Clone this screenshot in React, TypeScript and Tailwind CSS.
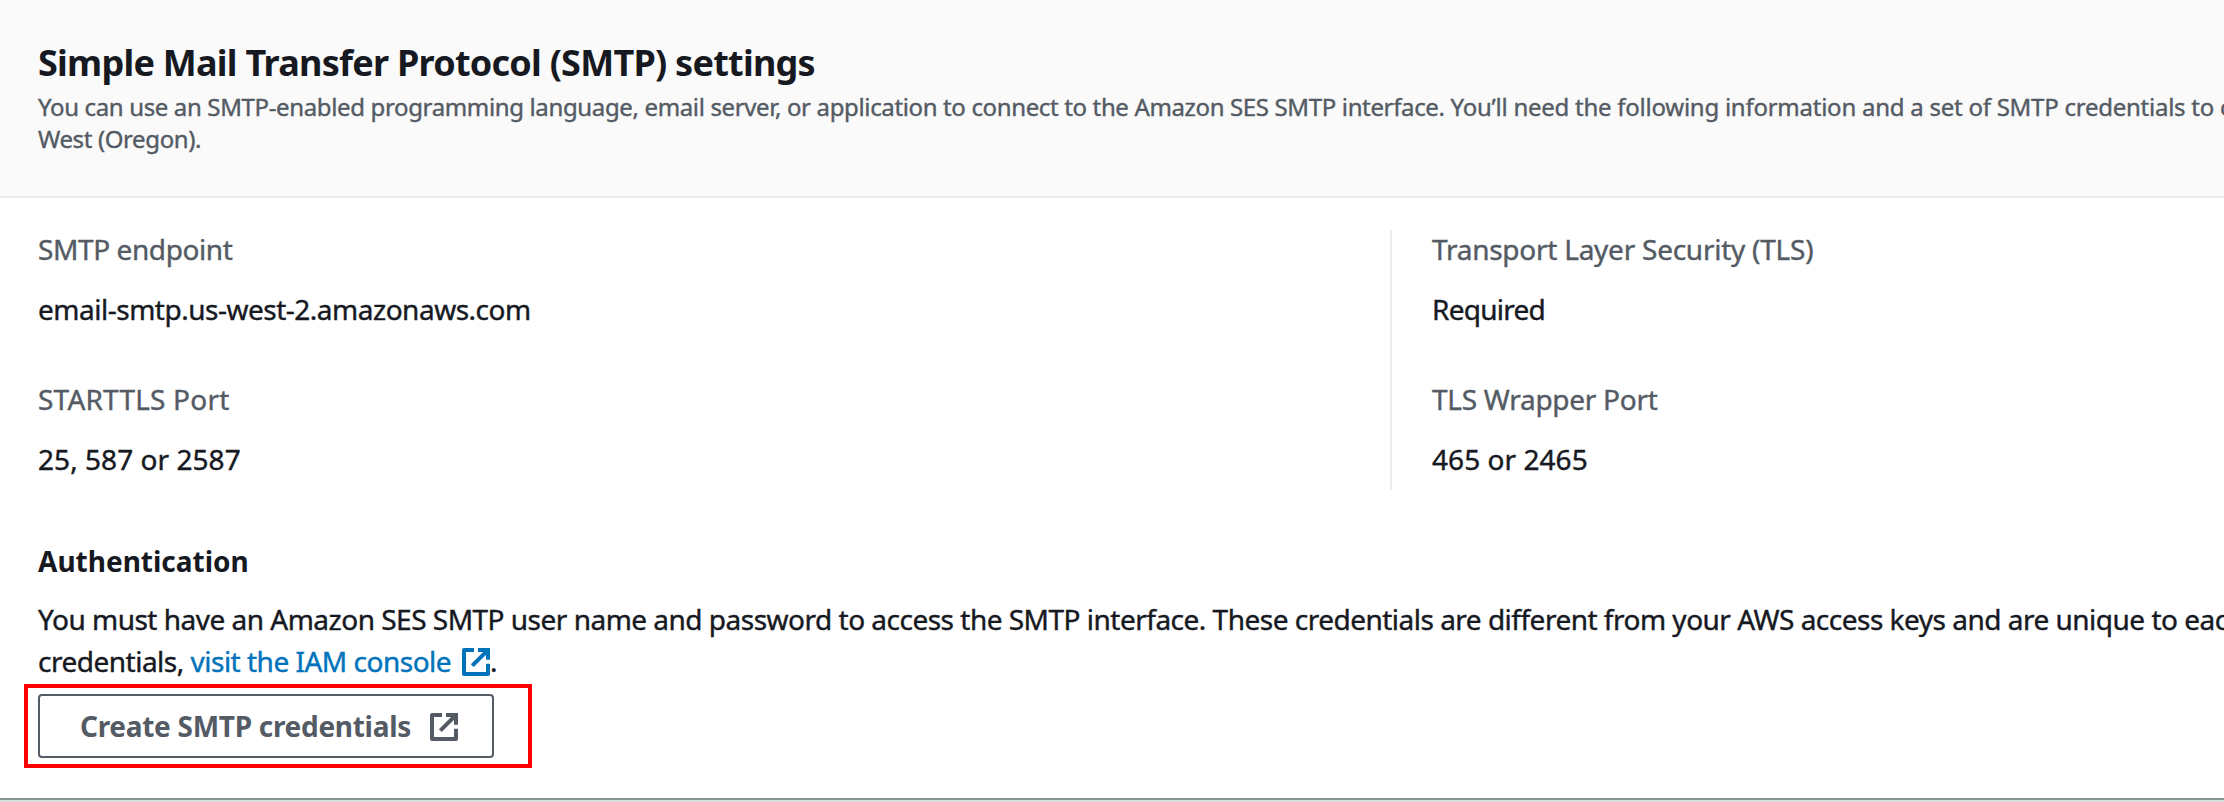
import React from "react";

function ExternalIcon({ className = "" }: { className?: string }) {
  return (
    <svg viewBox="0 0 28 28" className={`h-7 w-7 shrink-0 ${className}`} fill="none" stroke="currentColor" strokeWidth="4" aria-hidden="true">
      <path d="M12 2H2V26H26V15.7" strokeLinejoin="round" />
      <path d="M16 2H26V11.7" />
      <path d="M10.3 17.7L25 3" />
    </svg>
  );
}

type FieldProps = { label: string; value: string; labelClass: string; valueClass: string };

function Field({ label, value, labelClass, valueClass }: FieldProps) {
  return (
    <div className="flex flex-col gap-5 [-webkit-text-stroke:0.4px_currentColor]">
      <dt className={`leading-10 text-[#545b64] ${labelClass}`}>{label}</dt>
      <dd className={`leading-10 text-[#16191f] ${valueClass}`}>{value}</dd>
    </div>
  );
}

export default function App() {
  return (
    <div className="flex h-[802px] w-[2224px] flex-col overflow-hidden bg-[#d9dede] font-['Noto_Sans',sans-serif] text-[28px] text-[#16191f]">
      <section className="flex h-[800px] flex-col border-b-2 border-[#879596] bg-white">
        <header className="h-[198px] border-b-2 border-[#eaeded] bg-[#fafafa] pt-[41px] pl-[38px] whitespace-nowrap">
          <h1 className="text-4xl leading-[44px] font-bold tracking-[-0.75px]">Simple Mail Transfer Protocol (SMTP) settings</h1>
          <p className="mt-1.5 text-2xl leading-8 text-[#545b64] [-webkit-text-stroke:0.4px_currentColor]">
            <span className="block tracking-[-0.25px]">
              <span className="tracking-[-0.357px]">
                You can use an SMTP-enabled programming language, email server, or application to connect to the Amazon SES SMTP interface.
              </span>{" "}
              You’ll need the following information and a set of SMTP credentials to c
            </span>
            <span className="block tracking-[-0.38px]">West (Oregon).</span>
          </p>
        </header>

        <div className="pt-8 pl-[38px] whitespace-nowrap">
          <div className="grid h-[260px] grid-cols-[1352px_1fr]">
            <dl className="-mt-px flex flex-col gap-[50px]">
              <Field label="SMTP endpoint" value="email-smtp.us-west-2.amazonaws.com" labelClass="tracking-[-0.4px]" valueClass="tracking-[-0.49px]" />
              <Field label="STARTTLS Port" value="25, 587 or 2587" labelClass="tracking-[0.2px]" valueClass="tracking-[0.05px]" />
            </dl>
            <div className="border-l-2 border-[#eaeded] pl-10">
              <dl className="-mt-px flex flex-col gap-[50px]">
                <Field label="Transport Layer Security (TLS)" value="Required" labelClass="tracking-[-0.25px]" valueClass="tracking-[-0.75px]" />
                <Field label="TLS Wrapper Port" value="465 or 2465" labelClass="tracking-[-0.28px]" valueClass="tracking-[0.05px]" />
              </dl>
            </div>
          </div>

          <h2 className="mt-[51px] leading-10 font-bold tracking-[0px]">Authentication</h2>
          <p className="mt-[17px] leading-[42px] [-webkit-text-stroke:0.4px_currentColor]">
            <span className="block tracking-[-0.505px]">
              You must have an Amazon SES SMTP user name and password to access the SMTP interface. These credentials are different from your AWS access keys and are unique to eac
            </span>
            <span className="flex items-center">
              <span className="tracking-[-0.5px]">credentials,&nbsp;</span>
              <a href="#iam" className="flex items-center text-[#0073bb]">
                <span className="tracking-[-0.5px]">visit the IAM console</span>
                <ExternalIcon className="mt-0.5 ml-[11px]" />
              </a>
              <span>.</span>
            </span>
          </p>

          <div className="relative mt-3 w-fit">
            <button type="button" className="flex h-16 w-[456px] items-center rounded-[4px] border-2 border-[#545b64] bg-white pl-10 font-bold text-[#545b64]">
              <span className="w-[350px] text-left tracking-[-0.29px]">Create SMTP credentials</span>
              <ExternalIcon className="mt-px" />
            </button>
            <div className="pointer-events-none absolute -top-2.5 -left-3.5 h-[84px] w-[508px] border-4 border-[#fa0000]" />
          </div>
        </div>
      </section>
    </div>
  );
}
